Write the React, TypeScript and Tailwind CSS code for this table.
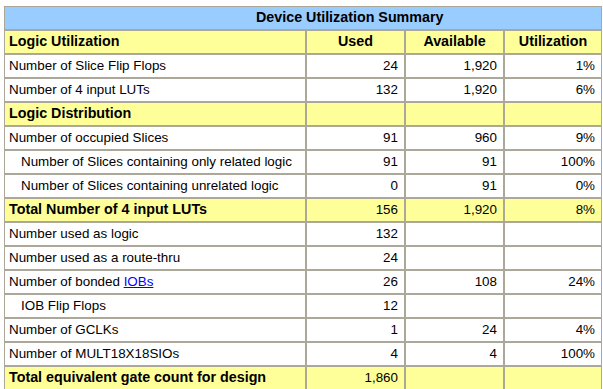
import React from "react";

type Row = {
  label: React.ReactNode;
  used?: string;
  avail?: string;
  util?: string;
  kind?: "head" | "indent" | "plain";
};

const rows: Row[] = [
  { label: "Logic Utilization", used: "Used", avail: "Available", util: "Utilization", kind: "head" },
  { label: "Number of Slice Flip Flops", used: "24", avail: "1,920", util: "1%" },
  { label: "Number of 4 input LUTs", used: "132", avail: "1,920", util: "6%" },
  { label: "Logic Distribution", kind: "head" },
  { label: "Number of occupied Slices", used: "91", avail: "960", util: "9%" },
  { label: "Number of Slices containing only related logic", used: "91", avail: "91", util: "100%", kind: "indent" },
  { label: "Number of Slices containing unrelated logic", used: "0", avail: "91", util: "0%", kind: "indent" },
  { label: "Total Number of 4 input LUTs", used: "156", avail: "1,920", util: "8%", kind: "head" },
  { label: "Number used as logic", used: "132" },
  { label: "Number used as a route-thru", used: "24" },
  {
    label: (
      <>
        Number of bonded <span className="text-[#0000ff] underline">IOBs</span>
      </>
    ),
    used: "26",
    avail: "108",
    util: "24%",
  },
  { label: "IOB Flip Flops", used: "12", kind: "indent" },
  { label: "Number of GCLKs", used: "1", avail: "24", util: "4%" },
  { label: "Number of MULT18X18SIOs", used: "4", avail: "4", util: "100%" },
  { label: "Total equivalent gate count for design", used: "1,860", kind: "head" },
];

const cell = "h-[24px] border border-[#aca899] flex items-center";

export default function App() {
  return (
    <div
      className="w-[603px] h-[389px] overflow-hidden bg-white pt-[6px] pl-[4px] text-[13.4px] text-black"
      style={{ fontFamily: '"Liberation Sans", Arial, sans-serif' }}
    >
      <div className="grid grid-cols-[302px_99px_99px_98px]">
        <div className={`${cell} col-span-4 bg-[#99ccff] font-bold text-[14.3px] pl-[251px]`}>
          Device Utilization Summary
        </div>
        {rows.map((r, i) => {
          const head = r.kind === "head";
          const bg = head ? "bg-[#ffff99]" : "bg-white";
          const num =
            head && i === 0 ? "justify-center font-bold text-[14.3px]" : "justify-end pr-[6px]";
          return (
            <React.Fragment key={i}>
              <div
                className={`${cell} ${bg} ${head ? "font-bold text-[14.3px]" : ""} ${
                  r.kind === "indent" ? "pl-[16px]" : "pl-[4px]"
                } whitespace-nowrap`}
              >
                <span>{r.label}</span>
              </div>
              <div className={`${cell} ${bg} ${num}`}>{r.used}</div>
              <div className={`${cell} ${bg} ${num}`}>{r.avail}</div>
              <div className={`${cell} ${bg} ${num}`}>{r.util}</div>
            </React.Fragment>
          );
        })}
      </div>
    </div>
  );
}
